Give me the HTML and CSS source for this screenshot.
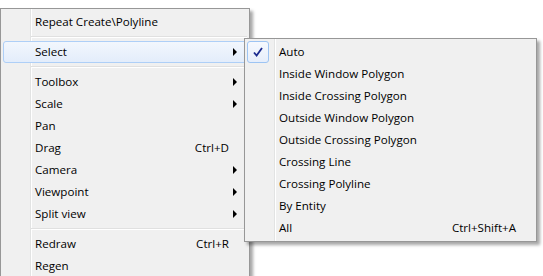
FILE: index.html
```html
<!DOCTYPE html>
<html lang="en">
<head>
    <meta charset="UTF-8">
    <title>Context menu</title>
    <link rel="stylesheet" href="styles.css">
</head>
<body>

    <div class="menu main-menu">
        <div class="menu-item"><span class="label">Repeat Create\Polyline</span></div>
        <div class="menu-sep"></div>
        <div class="menu-item active"><span class="label">Select</span><span class="arrow"></span></div>
        <div class="menu-sep"></div>
        <div class="menu-item"><span class="label">Toolbox</span><span class="arrow"></span></div>
        <div class="menu-item"><span class="label">Scale</span><span class="arrow"></span></div>
        <div class="menu-item"><span class="label">Pan</span></div>
        <div class="menu-item"><span class="label">Drag</span><span class="shortcut">Ctrl+D</span></div>
        <div class="menu-item"><span class="label">Camera</span><span class="arrow"></span></div>
        <div class="menu-item"><span class="label">Viewpoint</span><span class="arrow"></span></div>
        <div class="menu-item"><span class="label">Split view</span><span class="arrow"></span></div>
        <div class="menu-sep"></div>
        <div class="menu-item"><span class="label">Redraw</span><span class="shortcut">Ctrl+R</span></div>
        <div class="menu-item"><span class="label">Regen</span></div>
    </div>

    <!-- Select submenu, opened from the main menu -->
    <div class="menu sub-menu">
        <div class="menu-item checked">
            <div class="check">
                <svg width="12" height="12" viewBox="0 0 12 12"><path d="M2 6.5 L4.6 9.5 L10 2" fill="none" stroke="#1c2b8f" stroke-width="1.8"/></svg>
            </div>
            <span class="label">Auto</span>
        </div>
        <div class="menu-item"><span class="label">Inside Window Polygon</span></div>
        <div class="menu-item"><span class="label">Inside Crossing Polygon</span></div>
        <div class="menu-item"><span class="label">Outside Window Polygon</span></div>
        <div class="menu-item"><span class="label">Outside Crossing Polygon</span></div>
        <div class="menu-item"><span class="label">Crossing Line</span></div>
        <div class="menu-item"><span class="label">Crossing Polyline</span></div>
        <div class="menu-item"><span class="label">By Entity</span></div>
        <div class="menu-item"><span class="label">All</span><span class="shortcut">Ctrl+Shift+A</span></div>
    </div>

</body>
</html>
```

FILE: styles.css
```css
html, body {
    margin: 0;
    height: 100%;
    overflow: hidden;
}
body {
    font-family: "Open Sans", "Noto Sans", sans-serif;
    font-size: 11.6px;
    color: #000;
    background-color: #fff;
    padding-top: 8px;
    position: relative;
}
.menu {
    box-sizing: border-box;
    border: 1px solid #979797;
    padding: 2px;
    background: linear-gradient(to right, transparent 29px, #e2e3e3 29px, #e2e3e3 30px, #fff 30px, #fff 31px, transparent 31px) #f0f0f0;
    box-shadow: 3px 3px 3px rgba(0, 0, 0, 0.35);
}
.main-menu {
    width: 250px;
    height: 290px;
}
.sub-menu {
    position: absolute;
    left: 244px;
    top: 38px;
    width: 293px;
}
.menu-item {
    height: 22px;
    display: flex;
    align-items: center;
    padding-left: 32px;
    padding-right: 18px;
    padding-bottom: 1px;
    box-sizing: border-box;
    position: relative;
    border: 1px solid transparent;
    border-radius: 3px;
}
.menu-item .label {
    flex: 1;
    margin-left: -1px;
    white-space: nowrap;
}
.menu-item .shortcut {
    margin-right: -1px;
}
.menu-item .arrow {
    width: 0;
    height: 0;
    border-top: 4px solid transparent;
    border-bottom: 4px solid transparent;
    border-left: 4px solid #000;
    margin-right: -9px;
}
.menu-item.active {
    border-color: #aecff7;
    background: linear-gradient(to bottom, #f2f7fd, #e3edfb);
}
.menu-sep {
    margin: 3px 0 3px 28px;
    border-top: 1px solid #e0e0e0;
    border-bottom: 1px solid #fff;
    height: 0;
}
.check {
    position: absolute;
    left: -1px;
    top: -1px;
    width: 22px;
    height: 22px;
    box-sizing: border-box;
    border: 1px solid #9dc4f3;
    border-radius: 3px;
    background: linear-gradient(to bottom, #f6f9fe, #e6eefb);
    display: flex;
    align-items: center;
    justify-content: center;
}
```
